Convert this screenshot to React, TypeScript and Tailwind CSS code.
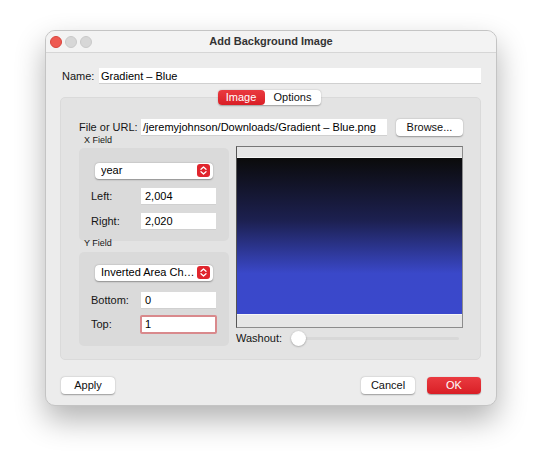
import React from 'react';

const font = { fontFamily: '"Liberation Sans", Arial, sans-serif' };

const Field: React.FC<{ value: string; focused?: boolean }> = ({ value, focused }) => (
  <div
    className={
      focused
        ? 'w-[77px] h-[19px] bg-white border-2 border-[#d9898c] rounded-[2px] px-[3px] text-[11px] leading-[15px] text-black'
        : 'w-[75px] h-[17px] bg-white border-b border-[#d0d0d0] px-[4px] text-[11px] leading-[17px] text-black'
    }
  >
    {value}
  </div>
);

const Popup: React.FC<{ label: string }> = ({ label }) => (
  <div className="w-[118px] h-[16px] bg-white rounded-[4px] shadow-[0_0.5px_1.5px_rgba(0,0,0,0.35)] flex items-center pl-[6px] pr-[3px] text-[11px] text-black">
    <span className="flex-1 whitespace-nowrap overflow-hidden">{label}</span>
    <span className="shrink-0 w-[13px] h-[13px] rounded-[3px] bg-[#e0252d] flex items-center justify-center">
      <svg width="7" height="9" viewBox="0 0 7 9" fill="none" stroke="white" strokeWidth="1.3" strokeLinecap="round" strokeLinejoin="round">
        <path d="M1 3.2 L3.5 1 L6 3.2" />
        <path d="M1 5.8 L3.5 8 L6 5.8" />
      </svg>
    </span>
  </div>
);

const Row: React.FC<{ label: string; value: string; focused?: boolean }> = ({ label, value, focused }) => (
  <div className="flex items-center pl-[12px]">
    <span className="w-[50px] shrink-0 whitespace-nowrap text-[11px] text-[#151515]">{label}</span>
    <div className={focused ? '-ml-[1px]' : ''}>
      <Field value={value} focused={focused} />
    </div>
  </div>
);

const Button: React.FC<{ label: string; primary?: boolean }> = ({ label, primary }) => (
  <div
    className={
      primary
        ? 'w-[54px] h-[17px] rounded-[4px] bg-gradient-to-b from-[#ea3a40] to-[#d91d25] text-white text-[11px] flex items-center justify-center shadow-[0_0.5px_1px_rgba(0,0,0,0.3)]'
        : 'w-[54px] h-[17px] rounded-[4px] bg-white text-[#111] text-[11px] flex items-center justify-center shadow-[0_0.5px_1.5px_rgba(0,0,0,0.35)]'
    }
  >
    {label}
  </div>
);

export default function App() {
  return (
    <div className="w-[542px] h-[466px] bg-white pl-[45px] pt-[30px]" style={font}>
      <div className="w-[452px] h-[376px] rounded-[10px] bg-[#ececec] border border-[#c4c4c4] shadow-[0_14px_30px_rgba(0,0,0,0.3)] overflow-hidden flex flex-col">
        {/* title bar */}
        <div className="h-[22px] shrink-0 bg-[#f3f3f3] border-b border-[#d6d6d6] flex items-center relative">
          <div className="flex gap-[3px] pl-[4px]">
            <span className="w-[12px] h-[12px] rounded-full bg-[#ee5a52] border border-[#d8443c]" />
            <span className="w-[12px] h-[12px] rounded-full bg-[#d7d7d7] border border-[#c9c9c9]" />
            <span className="w-[12px] h-[12px] rounded-full bg-[#d7d7d7] border border-[#c9c9c9]" />
          </div>
          <div className="absolute inset-0 flex items-center justify-center text-[11px] font-bold text-[#333]">
            Add Background Image
          </div>
        </div>

        {/* name row */}
        <div className="flex items-center pt-[15px] pl-[16px] pr-[15px]">
          <span className="w-[37px] shrink-0 text-[11px] text-[#151515]">Name:</span>
          <div className="flex-1 h-[16px] bg-white border-b border-[#d0d0d0] px-[2px] text-[11px] leading-[16px] text-black">
            Gradient – Blue
          </div>
        </div>

        {/* tabs + panel */}
        <div className="flex flex-col pl-[14px] pr-[15px] pt-[5px]">
          <div className="relative z-10 flex justify-center">
            <div className="flex h-[15px] rounded-[4px] bg-white shadow-[0_0.5px_1.5px_rgba(0,0,0,0.3)] text-[11px] ml-[-3px]">
              <span className="w-[47px] rounded-[4px] bg-gradient-to-b from-[#ea3a40] to-[#d91d25] text-white flex items-center justify-center">
                Image
              </span>
              <span className="w-[56px] text-[#111] flex items-center justify-center">Options</span>
            </div>
          </div>
          <div className="-mt-[8px] h-[263px] rounded-[5px] bg-[#e3e3e3] border border-[#dadada] pl-[18px] pr-[17px] pt-[21px]">
            {/* file row */}
            <div className="flex items-center">
              <span className="w-[62px] shrink-0 whitespace-nowrap text-[11px] text-[#151515]">File or URL:</span>
              <div className="w-[246px] shrink-0 h-[17px] bg-white border-b border-[#d0d0d0] px-[2px] text-[11px] leading-[17px] text-black whitespace-nowrap overflow-hidden">
                /jeremyjohnson/Downloads/Gradient – Blue.png
              </div>
              <div className="ml-[9px] shrink-0">
                <div className="w-[67px] h-[17px] rounded-[4px] bg-white text-[#111] text-[11px] flex items-center justify-center shadow-[0_0.5px_1.5px_rgba(0,0,0,0.35)]">
                  Browse...
                </div>
              </div>
            </div>

            {/* columns */}
            <div className="flex gap-[7px] -mt-[2px]">
              <div className="w-[150px] flex flex-col">
                <span className="pl-[5px] h-[12px] text-[9px] leading-[12px] text-[#151515]">X Field</span>
                <div className="mt-[2px] h-[93px] rounded-[5px] bg-[#dadada] pt-[15px] flex flex-col">
                  <div className="pl-[16px]">
                    <Popup label="year" />
                  </div>
                  <div className="mt-[9px] flex flex-col gap-[8px]">
                    <Row label="Left:" value="2,004" />
                    <Row label="Right:" value="2,020" />
                  </div>
                </div>
                <span className="-mt-[3px] pl-[5px] h-[11px] text-[9px] leading-[11px] text-[#151515]">Y Field</span>
                <div className="mt-[3px] h-[94px] rounded-[5px] bg-[#dadada] pt-[13px] flex flex-col">
                  <div className="pl-[16px]">
                    <Popup label="Inverted Area Ch…" />
                  </div>
                  <div className="mt-[11px] flex flex-col gap-[6px]">
                    <Row label="Bottom:" value="0" />
                    <Row label="Top:" value="1" focused />
                  </div>
                </div>
              </div>

              <div className="w-[227px] pt-[12px] flex flex-col">
                <div className="h-[182px] border border-[#8c8c8c] border-l-[#555] border-t-[#777] bg-[#e6e6e6] flex flex-col">
                  <div className="h-[11px] border-b border-[#f6f6f6]" />
                  <div className="h-[156px] bg-[linear-gradient(to_bottom,#0b0b0b_0%,#1c2050_40%,#3a48c9_74%,#3a48cc_100%)]" />
                  <div className="h-[12px] border-t border-[#f6f6f6]" />
                </div>
                <div className="mt-[3px] flex items-center h-[16px]">
                  <span className="text-[11px] text-[#151515] w-[55px] shrink-0">Washout:</span>
                  <div className="flex-1 relative flex items-center mr-[4px]">
                    <div className="w-full h-[3px] rounded-full bg-[#d8d8d8]" />
                    <span className="absolute left-0 w-[15px] h-[15px] rounded-full bg-white shadow-[0_0.5px_2px_rgba(0,0,0,0.35)]" />
                  </div>
                </div>
              </div>
            </div>
          </div>
        </div>

        {/* buttons */}
        <div className="flex items-center pl-[15px] pr-[15px] pt-[17px]">
          <Button label="Apply" />
          <div className="flex-1" />
          <Button label="Cancel" />
          <div className="w-[12px]" />
          <Button label="OK" primary />
        </div>
      </div>
    </div>
  );
}
